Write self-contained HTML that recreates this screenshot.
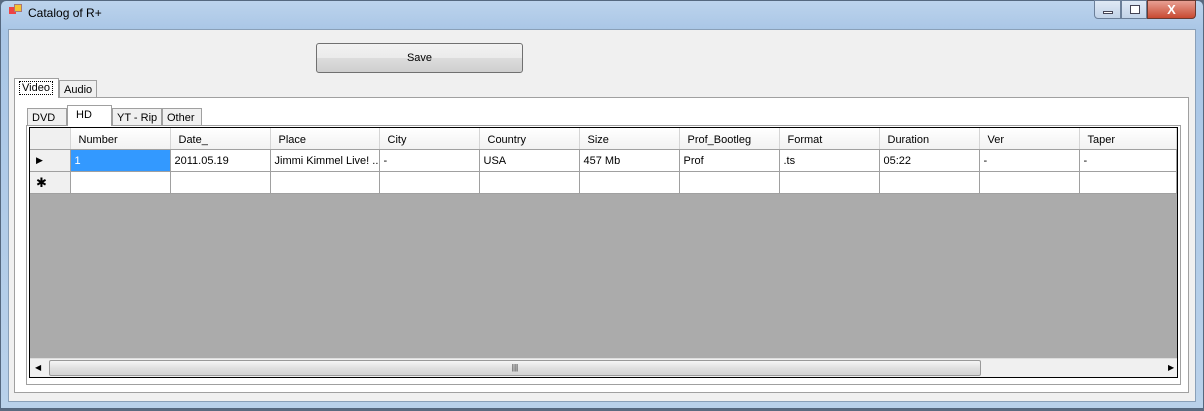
<!DOCTYPE html>
<html><head><style>
*{margin:0;padding:0;box-sizing:border-box}
body{width:1204px;height:411px;overflow:hidden;background:#5a6a80;font-family:"Liberation Sans",sans-serif;font-size:11px;color:#000;position:relative}
.a{position:absolute}
.frame{left:0;top:0;width:1204px;height:409px;background:linear-gradient(#bcd3ec,#a9c6e6 30px,#b9d1ea);border:1px solid #55687f;border-radius:6px 6px 0 0}
.client{left:8px;top:29px;width:1188px;height:373px;background:#f0f0f0;border:1px solid #8aa0b8}
.tab{background:#f0f0f0;border:1px solid #a0a0a0;border-bottom:none;padding:3px 4px 0;font-size:11px;white-space:nowrap;overflow:hidden}
table{border-collapse:collapse;table-layout:fixed}
td{border-right:1px solid #a0a0a0;border-bottom:1px solid #a0a0a0;height:22px;padding:1px 4px 0;white-space:nowrap;overflow:hidden;font-size:11px}
tr.h td{height:21px;background:linear-gradient(#fff,#f2f2f2);border-right:1px solid #d5d5d5;border-bottom:1px solid #a0a0a0;padding:3px 0 0 8px}
td.rh{background:#f0f0f0;border-right:1px solid #a0a0a0}
</style></head><body>
<div class="a frame"></div>
<div class="a" style="left:9px;top:7px;width:7px;height:7px;background:#e44"></div>
<div class="a" style="left:14px;top:4px;width:8px;height:8px;background:#f4c430;border:1px solid #a77"></div>
<div class="a" style="left:28px;top:6px;font-size:12px">Catalog of R+</div>
<div class="a" style="left:1094px;top:0;width:27px;height:19px;background:linear-gradient(#dfe9f5,#c2d3e8);border:1px solid #6b7f99;border-radius:0 0 0 4px"><div class="a" style="left:8px;top:10px;width:10px;height:3px;background:#fff;border:1px solid #445"></div></div>
<div class="a" style="left:1121px;top:0;width:26px;height:19px;background:linear-gradient(#dfe9f5,#c2d3e8);border:1px solid #6b7f99"><div class="a" style="left:8px;top:4px;width:10px;height:9px;border:1px solid #445;background:#fff"></div></div>
<div class="a" style="left:1147px;top:0;width:49px;height:19px;background:linear-gradient(#e8a093,#c84a32);border:1px solid #6b3a30;border-radius:0 0 4px 0;color:#fff;font-weight:bold;font-size:13px;text-align:center;line-height:18px">X</div>
<div class="a client"></div>
<div class="a" style="left:316px;top:43px;width:207px;height:30px;border:1px solid #707070;border-radius:3px;background:linear-gradient(#f2f2f2,#ebebeb 50%,#dddddd 50%,#cfcfcf);text-align:center;line-height:28px;font-size:11px">Save</div>
<div class="a" style="left:14px;top:97px;width:1175px;height:296px;background:#fff;border:1px solid #a0a0a0"></div>
<div class="a tab" style="left:14px;top:78px;width:45px;height:20px;background:#fff;z-index:2"><span style="border:1px dotted #000;padding:0 2px">Video</span></div>
<div class="a tab" style="left:59px;top:80px;width:38px;height:17px;padding-top:3px">Audio</div>
<div class="a" style="left:26px;top:125px;width:1155px;height:260px;background:#fff;border:1px solid #a0a0a0"></div>
<div class="a tab" style="left:27px;top:108px;width:40px;height:17px">DVD</div>
<div class="a tab" style="left:67px;top:105px;width:45px;height:21px;background:#fff;z-index:2;padding-left:8px">HD</div>
<div class="a tab" style="left:112px;top:108px;width:50px;height:17px">YT - Rip</div>
<div class="a tab" style="left:162px;top:108px;width:40px;height:17px">Other</div>
<div class="a" style="left:29px;top:127px;width:1149px;height:251px;background:#ababab;border:1px solid #000;overflow:hidden">
<table style="width:1146px;background:#fff">
<colgroup><col style="width:40px"><col style="width:100px"><col style="width:100px"><col style="width:109px"><col style="width:100px"><col style="width:100px"><col style="width:100px"><col style="width:100px"><col style="width:100px"><col style="width:100px"><col style="width:100px"><col style="width:97px"></colgroup>
<tr class="h"><td class="rh" style="background:#f0f0f0"></td><td>Number</td><td>Date_</td><td>Place</td><td>City</td><td>Country</td><td>Size</td><td>Prof_Bootleg</td><td>Format</td><td>Duration</td><td>Ver</td><td>Taper</td></tr>
<tr><td class="rh" style="font-size:9px;padding-left:6px">&#9654;</td><td style="background:#3399ff;color:#fff">1</td><td>2011.05.19</td><td>Jimmi Kimmel Live! ...</td><td>-</td><td>USA</td><td>457 Mb</td><td>Prof</td><td>.ts</td><td>05:22</td><td>-</td><td>-</td></tr>
<tr><td class="rh" style="font-size:13px;padding-left:6px">&#10033;</td><td></td><td></td><td></td><td></td><td></td><td></td><td></td><td></td><td></td><td></td><td></td></tr>
</table>
<div class="a" style="left:0;top:230px;width:1147px;height:19px;background:#f0f0f0;border-top:1px solid #ddd">
<div class="a" style="left:5px;top:4px;font-size:8px">&#9664;</div>
<div class="a" style="left:1138px;top:4px;font-size:8px">&#9654;</div>
<div class="a" style="left:19px;top:1px;width:932px;height:16px;border:1px solid #999;border-radius:2px;background:linear-gradient(#f5f5f5,#e0e0e0 50%,#d4d4d4);text-align:center;font-size:8px;line-height:14px">|||</div>
</div>
</div>
</body></html>
